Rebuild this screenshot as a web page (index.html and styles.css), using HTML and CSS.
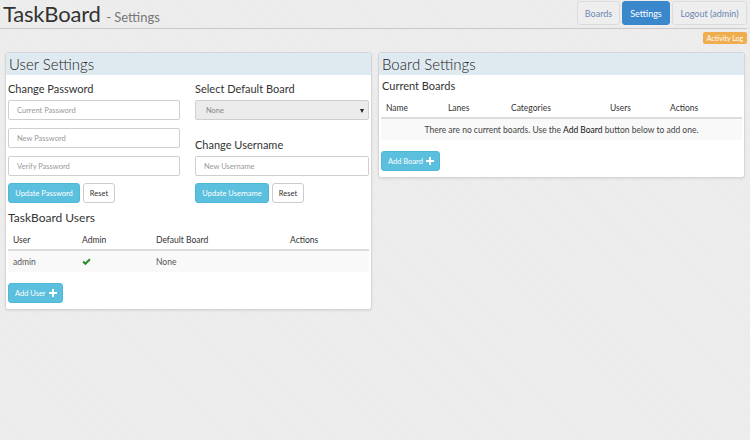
FILE: index.html
```html
<!DOCTYPE html>
<html>
<head>
<meta charset="utf-8">
<link rel="stylesheet" href="styles.css">
</head>
<body>
<header class="topbar">
  <h1 class="brand">TaskBoard <small class="brand-sub">- Settings</small></h1>
  <nav class="nav">
    <a class="nav-btn">Boards</a>
    <a class="nav-btn active">Settings</a>
    <a class="nav-btn">Logout (admin)</a>
  </nav>
</header>
<div class="rule"></div>
<div class="badge-row"><span class="badge">Activity Log</span></div>
<main class="panels">
  <section class="panel">
    <h2 class="panel-head">User Settings</h2>
    <div class="panel-body">
      <div class="cols">
        <div class="col">
          <h3 class="sub">Change Password</h3>
          <div class="field"><span class="ph">Current Password</span></div>
          <div class="field gap"><span class="ph">New Password</span></div>
          <div class="field gap"><span class="ph">Verify Password</span></div>
          <div class="btns">
            <button class="btn info">Update Password</button>
            <button class="btn plain">Reset</button>
          </div>
        </div>
        <div class="col">
          <h3 class="sub">Select Default Board</h3>
          <div class="field select"><span class="ph dark">None</span><span class="caret"></span></div>
          <h3 class="sub spaced">Change Username</h3>
          <div class="field"><span class="ph">New Username</span></div>
          <div class="btns">
            <button class="btn info">Update Username</button>
            <button class="btn plain">Reset</button>
          </div>
        </div>
      </div>
      <h3 class="sub users">TaskBoard Users</h3>
      <table class="tbl">
        <colgroup><col class="w69"><col class="w74"><col class="w134"><col></colgroup>
        <thead><tr><th>User</th><th>Admin</th><th>Default Board</th><th>Actions</th></tr></thead>
        <tbody><tr><td>admin</td><td><svg class="check" viewBox="0 0 12 10" width="9" height="8"><path d="M0.5 5.2 L2.4 3.3 L4.5 5.4 L9.6 0.3 L11.5 2.2 L4.5 9.2 Z" fill="#2c8a2c"/></svg></td><td>None</td><td></td></tr></tbody>
      </table>
      <button class="btn info add">Add User <svg class="plus" viewBox="0 0 10 10" width="8" height="8"><path d="M3.8 0h2.4v3.8H10v2.4H6.2V10H3.8V6.2H0V3.8h3.8z" fill="#fff"/></svg></button>
    </div>
  </section>
  <section class="panel">
    <h2 class="panel-head">Board Settings</h2>
    <div class="panel-body">
      <h3 class="sub first">Current Boards</h3>
      <table class="tbl boards">
        <colgroup><col class="w62"><col class="w63"><col class="w99"><col class="w60"><col></colgroup>
        <thead><tr><th>Name</th><th>Lanes</th><th>Categories</th><th>Users</th><th>Actions</th></tr></thead>
        <tbody><tr><td colspan="5" class="empty">There are no current boards. Use the <span class="em">Add Board</span> button below to add one.</td></tr></tbody>
      </table>
      <button class="btn info add">Add Board <svg class="plus" viewBox="0 0 10 10" width="8" height="8"><path d="M3.8 0h2.4v3.8H10v2.4H6.2V10H3.8V6.2H0V3.8h3.8z" fill="#fff"/></svg></button>
    </div>
  </section>
</main>
</body>
</html>
```
FILE: styles.css
```css
* { box-sizing: border-box; }
body {
  margin: 0;
  width: 750px;
  height: 440px;
  background-color: #ebebeb;
  background-image: repeating-linear-gradient(45deg, rgba(255,255,255,0.18) 0 1px, transparent 1px 3px);
  font-family: Lato, "Noto Sans", sans-serif;
  color: #333;
  overflow: hidden;
}
.topbar {
  display: flex;
  justify-content: space-between;
  align-items: flex-start;
  height: 28px;
  padding: 0 3px 0 3px;
}
.brand {
  margin: 0;
  font-weight: 400;
  font-size: 22px;
  line-height: 28px;
  color: #333;
  letter-spacing: -0.2px;
}
.brand-sub {
  font-size: 13px;
  color: #777;
  letter-spacing: 0;
}
.nav {
  display: flex;
  gap: 2px;
  padding-top: 1px;
}
.nav-btn {
  display: flex;
  align-items: center;
  justify-content: center;
  height: 24px;
  padding: 0;
  font-size: 9px;
  white-space: nowrap;
  color: #6d86b3;
  background: #eeeeee;
  border: 1px solid #dcdcdc;
  border-radius: 3px;
}
.nav-btn.active {
  background: #3b87cb;
  border-color: #3b87cb;
  color: #fff;
  width: 48px;
}
.nav-btn:first-child { width: 43px; }
.nav-btn:last-child { width: 75px; }
.rule {
  height: 1px;
  background: #c9c9c9;
  margin: 0 3px 0 0;
}
.badge-row {
  display: flex;
  justify-content: flex-end;
  padding: 3px 3px 0 0;
  height: 23px;
}
.badge {
  display: inline-block;
  height: 12px;
  width: 44px;
  line-height: 12px;
  font-size: 7px;
  text-align: center;
  color: #fff;
  background: #f0ad4e;
  border-radius: 2px;
}
.panels {
  display: flex;
  gap: 6px;
  padding: 0 5px;
  align-items: flex-start;
}
.panel {
  width: 367px;
  background: #fff;
  border: 1px solid #d6d6d6;
  border-radius: 3px;
  box-shadow: 0 1px 2px rgba(0,0,0,0.08);
  overflow: hidden;
}
.panel-head {
  margin: 0;
  height: 22px;
  line-height: 22px;
  padding-left: 3px;
  font-size: 15px;
  font-weight: 300;
  background: #dfeaf0;
  color: #222;
}
.panel-body {
  padding: 0 2px 6px 2px;
}
.cols {
  display: flex;
  gap: 15px;
}
.col { flex: 1; }
.col:first-child { flex: 0 0 172px; }
.sub {
  margin: 7px 0 4px 0;
  font-size: 11px;
  line-height: 14px;
  font-weight: 400;
  color: #333;
}
.sub.spaced { margin-top: 18px; }
.sub.users { margin: 7px 0 2px 0; font-size: 12px; line-height: 15px; }
.sub.first { margin: 4px 0 2px 1px; }
.field {
  display: flex;
  align-items: center;
  height: 20px;
  padding: 0 8px;
  border: 1px solid #cfcfcf;
  border-radius: 2px;
  background: #fff;
}
.field.gap { margin-top: 8px; }
.field.select {
  background: #ebebeb;
  position: relative;
}
.ph {
  font-size: 7.5px;
  color: #999;
}
.ph.dark { color: #888; padding-left: 2px; }
.caret {
  position: absolute;
  right: 4px;
  top: 8px;
  border-left: 2px solid transparent;
  border-right: 2px solid transparent;
  border-top: 4px solid #222;
}
.btns {
  display: flex;
  gap: 3px;
  margin-top: 7px;
}
.btn {
  font-family: inherit;
  height: 20px;
  padding: 0 7px;
  font-size: 7.5px;
  border-radius: 3px;
  cursor: pointer;
  display: inline-flex;
  align-items: center;
  gap: 4px;
}
.btn.info {
  background: #5bc0de;
  border: 1px solid #4fb8d8;
  color: #fff;
}
.btn.plain {
  background: #fff;
  border: 1px solid #ccc;
  color: #333;
  padding: 0 6px;
}
.btns .btn.info { width: 72px; justify-content: center; padding: 0; }
.col:last-child .btns .btn.info { width: 74px; }
.btns .btn.plain { width: 32px; justify-content: center; }
.btn.add { margin-top: 11px; height: 20px; padding: 0 5px 0 6px; gap: 3px; }
.tbl {
  width: 100%;
  border-collapse: collapse;
  table-layout: fixed;
  font-size: 8.5px;
}
.tbl th {
  text-align: left;
  font-weight: 400;
  height: 23px;
  padding: 3px 5px 0 5px;
  border-bottom: 2px solid #ddd;
  color: #333;
}
.tbl td {
  height: 22px;
  padding: 0 5px;
  background: #f9f9f9;
  color: #555;
}
.tbl td.empty { text-align: center; color: #444; }
.tbl td.empty .em { color: #111; }
.w69 { width: 69px; }
.w74 { width: 74px; }
.w134 { width: 134px; }
.w62 { width: 62px; }
.w63 { width: 63px; }
.w99 { width: 99px; }
.w60 { width: 60px; }
.check { display: block; }
.plus { display: block; }
```
